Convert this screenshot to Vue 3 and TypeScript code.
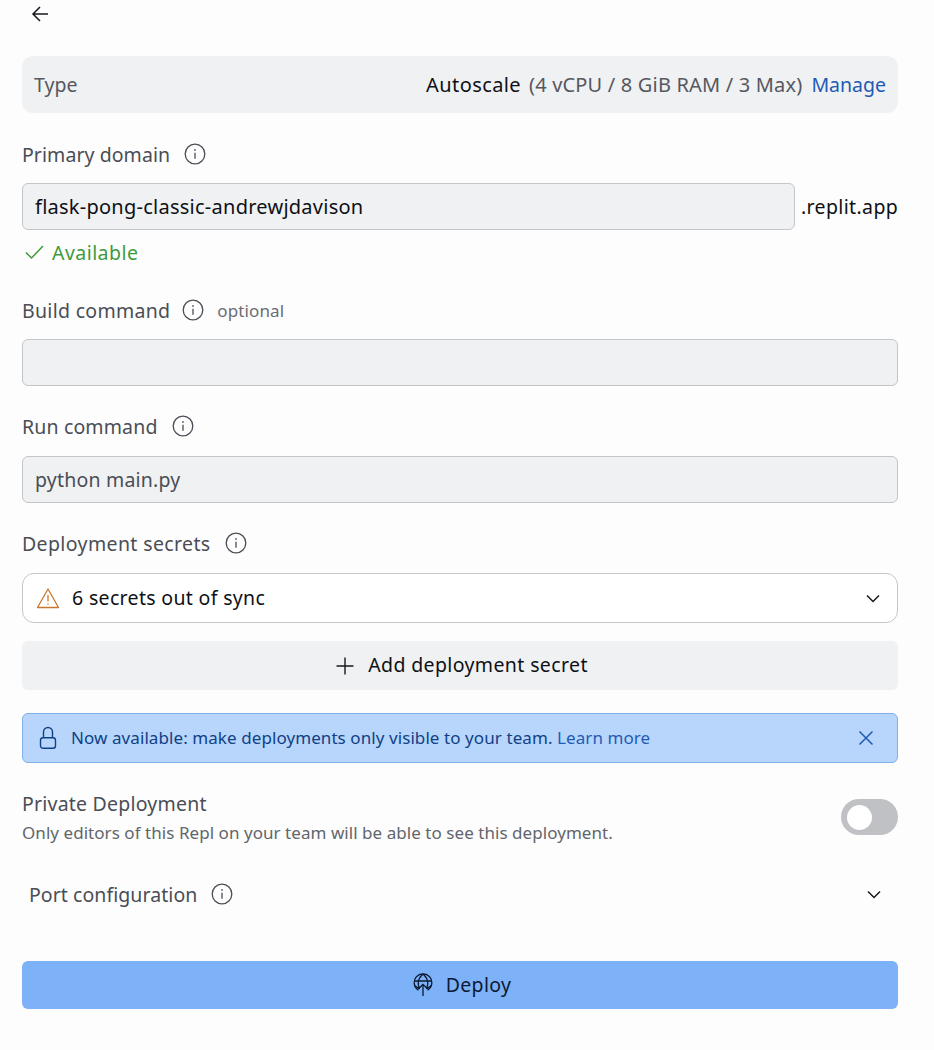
<template>
  <div class="page">
    <button class="back" aria-label="Back">
      <svg width="20" height="20" viewBox="0 0 20 20" fill="none" stroke="#16181d" stroke-width="1.5">
        <path d="M18 10H3M10 3 3 10l7 7" />
      </svg>
    </button>

    <div class="type-row">
      <span class="muted">Type</span>
      <span class="type-value">
        <span class="autoscale">Autoscale</span>
        <span class="muted spec">(4 vCPU / 8 GiB RAM / 3 Max)</span>
        <a class="link manage">Manage</a>
      </span>
    </div>

    <div class="label first">
      <span class="primary-text">Primary domain</span>
      <svg class="info" viewBox="0 0 22 22"><use href="#info-icon" /></svg>
    </div>
    <div class="domain-row">
      <div class="input domain">flask-pong-classic-andrewjdavison</div>
      <span class="suffix">.replit.app</span>
    </div>
    <div class="available">
      <svg width="20" height="20" viewBox="0 0 20 20" fill="none" stroke="#3f9a3c" stroke-width="1.5">
        <path d="M2 10.5 7.500 16 19 4" />
      </svg>
      Available
    </div>

    <div class="label build">
      <span class="build-text">Build command</span>
      <svg class="info" viewBox="0 0 22 22"><use href="#info-icon" /></svg>
      <span class="optional">optional</span>
    </div>
    <div class="input"></div>

    <div class="label run">
      <span class="run-text">Run command</span>
      <svg class="info" viewBox="0 0 22 22"><use href="#info-icon" /></svg>
    </div>
    <div class="input dim">python main.py</div>

    <div class="label run">
      <span class="secrets-text">Deployment secrets</span>
      <svg class="info" viewBox="0 0 22 22"><use href="#info-icon" /></svg>
    </div>
    <div class="select">
      <svg width="24" height="22" viewBox="0 0 24 22" fill="none" stroke="#c9772f" stroke-width="1.3" stroke-linejoin="round">
        <path d="M12 2 22.500 20.500h-21Z" />
        <path d="M12 8v6.500M12 16.600v1.200" />
      </svg>
      <span class="select-text">6 secrets out of sync</span>
      <svg class="chevron" width="16" height="16" viewBox="0 0 16 16" fill="none" stroke="#16181d" stroke-width="1.5">
        <path d="M2 5.500 8 11.500 14 5.500" />
      </svg>
    </div>
    <div class="add-btn">
      <svg width="20" height="20" viewBox="0 0 20 20" fill="none" stroke="#16181d" stroke-width="1.4">
        <path d="M10 1.500v17M1.500 10h17" />
      </svg>
      <span class="add-text">Add deployment secret</span>
    </div>

    <div class="banner">
      <svg width="18" height="24" viewBox="0 0 18 24" fill="none" stroke="#0f4187" stroke-width="1.4">
        <rect x="1.500" y="11.700" width="15" height="10.600" rx="2.500" />
        <path d="M4.500 11.700V6a4.500 4.500 0 0 1 9 0v5.700" />
      </svg>
      <span class="banner-text">Now available: make deployments only visible to your team. <a class="link">Learn more</a></span>
      <svg class="close" width="16" height="16" viewBox="0 0 16 16" fill="none" stroke="#1f5bb5" stroke-width="1.5">
        <path d="M1.500 1.500 14.500 14.500M14.500 1.500 1.500 14.500" />
      </svg>
    </div>

    <div class="private">
      <div>
        <div class="private-title">Private Deployment</div>
        <div class="private-sub">Only editors of this Repl on your team will be able to see this deployment.</div>
      </div>
      <div class="toggle"><span class="knob"></span></div>
    </div>

    <div class="port">
      <span class="port-text">Port configuration</span>
      <svg class="info" viewBox="0 0 22 22"><use href="#info-icon" /></svg>
      <svg class="chevron" width="16" height="16" viewBox="0 0 16 16" fill="none" stroke="#16181d" stroke-width="1.5">
        <path d="M2 5.500 8 11.500 14 5.500" />
      </svg>
    </div>

    <div class="deploy">
      <svg width="20" height="24" viewBox="0 0 20 24" fill="none" stroke="#0c1a33" stroke-width="1.3">
        <path d="M5.500 17.200A8.800 8.800 0 1 1 14.500 17.200" />
        <path d="M1.500 8H18.500M1.500 12.500 6 15.500M18.500 12.500 14 15.500M10 1C3.500 7 5 12 6.500 16M10 1c6.500 6 5 11 3.500 15" />
        <path d="M10 23V11.500M5.800 15.500 10 11.300 14.200 15.500" />
      </svg>
      <span class="deploy-text">Deploy</span>
    </div>

    <svg width="0" height="0" class="defs">
      <defs>
        <g id="info-icon" fill="none" stroke="#4a4d55" stroke-width="1.3">
          <circle cx="11" cy="11" r="9.800" />
          <path d="M11 9.800v6" />
          <path d="M11 6.300v1.500" stroke-width="1.600" />
        </g>
      </defs>
    </svg>
  </div>
</template>

<script setup lang="ts">
</script>

<style>
html,
body {
  background: #fdfdfd;
}
</style>

<style scoped>
.page {
  box-sizing: border-box;
  width: 934px;
  height: 1050px;
  padding: 4px 36px 0 22px;
  font-family: "Noto Sans", "Open Sans", sans-serif;
  font-size: 19.500px;
  color: #0e1015;
  background: #fdfdfd;
  overflow: hidden;
}

.back {
  display: block;
  width: 20px;
  height: 20px;
  margin-left: 8px;
  padding: 0;
  border: 0;
  background: none;
}

.type-row {
  display: flex;
  justify-content: space-between;
  align-items: center;
  height: 57px;
  margin-top: 32px;
  padding: 0 12px;
  border-radius: 11px;
  background: #f0f1f2;
}

.muted {
  color: #55585f;
}

.type-value {
  white-space: nowrap;
}

.autoscale {
  font-size: 20px;
  letter-spacing: 0.4px;
}

.spec {
  margin-left: 8px;
  font-size: 20px;
  letter-spacing: 0.18px;
}

.link {
  color: #1f5bb5;
}

.manage {
  margin-left: 9px;
}

.label {
  display: flex;
  align-items: center;
  height: 28px;
  color: #4a4d55;
}

.label.first {
  margin-top: 27px;
  margin-bottom: 15px;
}

.label.build {
  margin-top: 30px;
  margin-bottom: 15px;
}

.label.run {
  margin-top: 26px;
  margin-bottom: 16px;
}

.primary-text {
  letter-spacing: 0.07px;
}

.build-text {
  letter-spacing: 0.3px;
}

.run-text {
  letter-spacing: 0.15px;
}

.secrets-text {
  letter-spacing: 0.38px;
}

.port-text {
  letter-spacing: 0.06px;
}

.info {
  flex: none;
  width: 22px;
  height: 22px;
  margin-left: 14px;
}

.build .info {
  margin-left: 12px;
}

.optional {
  margin-left: 13px;
  font-size: 17px;
  letter-spacing: 0.1px;
  color: #6a6d74;
}

.input {
  box-sizing: border-box;
  height: 47px;
  padding: 0 12px;
  line-height: 45px;
  border: 1px solid #c4c6c9;
  border-radius: 6px;
  background: #f0f1f2;
}

.input.dim {
  color: #4a4d55;
  letter-spacing: 0.2px;
}

.domain-row {
  display: flex;
  align-items: center;
  gap: 6px;
}

.domain {
  flex: 1;
  font-size: 20px;
  letter-spacing: 0.25px;
}

.suffix {
  width: 97px;
  white-space: nowrap;
  letter-spacing: 0.36px;
}

.available {
  display: flex;
  align-items: center;
  gap: 8px;
  height: 28px;
  margin-top: 8px;
  margin-left: 2px;
  color: #3f9a3c;
  letter-spacing: 0.45px;
}

.select {
  box-sizing: border-box;
  display: flex;
  align-items: center;
  height: 50px;
  padding: 0 16px 0 13px;
  border: 1px solid #c4c6c9;
  border-radius: 12px;
  background: #fff;
}

.select-text {
  margin-left: 12px;
  padding-bottom: 2px;
  letter-spacing: 0.33px;
}

.chevron {
  margin-left: auto;
}

.add-btn {
  display: flex;
  justify-content: center;
  align-items: center;
  gap: 13px;
  height: 49px;
  margin-top: 18px;
  padding-left: 3px;
  border-radius: 6px;
  background: #f0f1f2;
  letter-spacing: 0.38px;
}

.add-text {
  padding-bottom: 2px;
}

.banner {
  box-sizing: border-box;
  display: flex;
  align-items: center;
  height: 50px;
  margin-top: 23px;
  padding: 0 23px 0 16px;
  border: 1px solid #7fb0ea;
  border-radius: 6px;
  background: #b8d6fb;
  color: #0f4187;
  font-size: 17px;
}

.banner-text {
  margin-left: 14px;
  padding-bottom: 2px;
  letter-spacing: 0.08px;
}

.close {
  margin-left: auto;
}

.private {
  display: flex;
  justify-content: space-between;
  align-items: center;
  margin-top: 27px;
}

.private-title {
  height: 28px;
  line-height: 28px;
  color: #4a4d55;
  letter-spacing: 0.22px;
}

.private-sub {
  height: 28px;
  line-height: 30px;
  font-size: 17px;
  letter-spacing: 0.05px;
  color: #62656c;
}

.toggle {
  flex: none;
  display: flex;
  width: 57px;
  height: 36px;
  margin-top: -2px;
  border-radius: 18px;
  background: #bfc1c4;
}

.knob {
  display: block;
  width: 25px;
  height: 25px;
  margin: 6px 0 0 6px;
  border-radius: 50%;
  background: #fff;
}

.port {
  display: flex;
  align-items: center;
  height: 28px;
  margin-top: 34px;
  padding: 0 16px 0 7px;
  color: #4a4d55;
}

.deploy {
  display: flex;
  justify-content: center;
  align-items: center;
  gap: 13px;
  height: 48px;
  margin-top: 53px;
  padding-left: 4px;
  border-radius: 6px;
  background: #7db2f8;
  color: #0c1a33;
}

.deploy-text {
  padding-bottom: 2px;
  letter-spacing: 0.3px;
}

.defs {
  position: absolute;
}
</style>
